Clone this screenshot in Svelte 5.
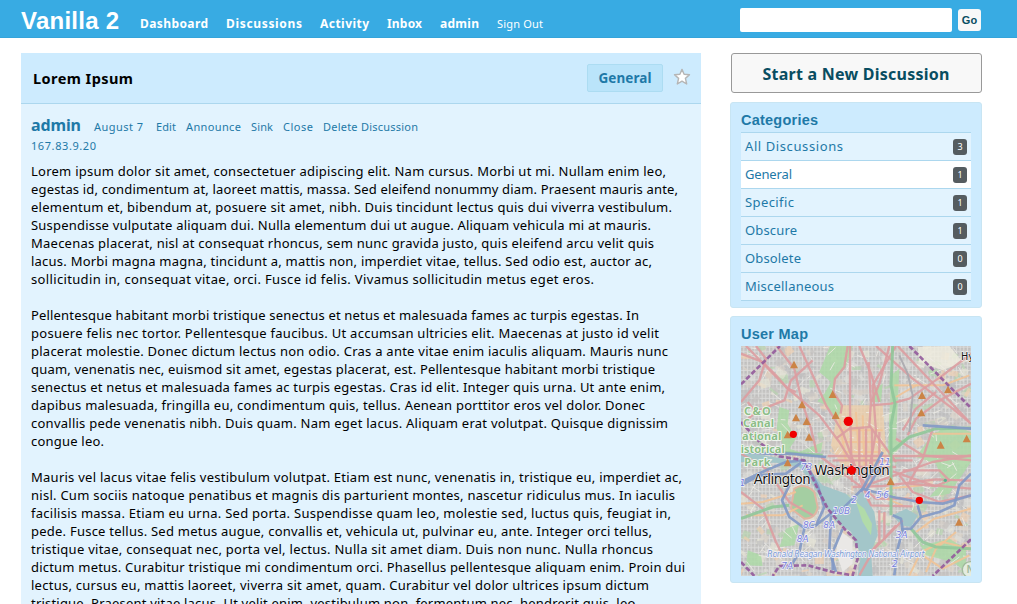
<script>
  const nav = [
    ['Dashboard', 68], ['Discussions', 76], ['Activity', 49], ['Inbox', 35], ['admin', 39]
  ];
  const actions = [['Edit', 20], ['Announce', 55], ['Sink', 22], ['Close', 30], ['Delete Discussion', 95]];
  const categories = [
    ['All Discussions', 3, 98], ['General', 1, 47], ['Specific', 1, 49],
    ['Obscure', 1, 52], ['Obsolete', 0, 56], ['Miscellaneous', 0, 89]
  ];
  const paragraphs = [
    [
      ['Lorem ipsum dolor sit amet, consectetuer adipiscing elit. Nam cursus. Morbi ut mi. Nullam enim leo,', 635],
      ['egestas id, condimentum at, laoreet mattis, massa. Sed eleifend nonummy diam. Praesent mauris ante,', 647],
      ['elementum et, bibendum at, posuere sit amet, nibh. Duis tincidunt lectus quis dui viverra vestibulum.', 641],
      ['Suspendisse vulputate aliquam dui. Nulla elementum dui ut augue. Aliquam vehicula mi at mauris.', 620],
      ['Maecenas placerat, nisl at consequat rhoncus, sem nunc gravida justo, quis eleifend arcu velit quis', 623],
      ['lacus. Morbi magna magna, tincidunt a, mattis non, imperdiet vitae, tellus. Sed odio est, auctor ac,', 621],
      ['sollicitudin in, consequat vitae, orci. Fusce id felis. Vivamus sollicitudin metus eget eros.', 563]
    ],
    [
      ['Pellentesque habitant morbi tristique senectus et netus et malesuada fames ac turpis egestas. In', 608],
      ['posuere felis nec tortor. Pellentesque faucibus. Ut accumsan ultricies elit. Maecenas at justo id velit', 628],
      ['placerat molestie. Donec dictum lectus non odio. Cras a ante vitae enim iaculis aliquam. Mauris nunc', 637],
      ['quam, venenatis nec, euismod sit amet, egestas placerat, est. Pellentesque habitant morbi tristique', 624],
      ['senectus et netus et malesuada fames ac turpis egestas. Cras id elit. Integer quis urna. Ut ante enim,', 634],
      ['dapibus malesuada, fringilla eu, condimentum quis, tellus. Aenean porttitor eros vel dolor. Donec', 614],
      ['convallis pede venenatis nibh. Duis quam. Nam eget lacus. Aliquam erat volutpat. Quisque dignissim', 637],
      ['congue leo.', 73]
    ],
    [
      ['Mauris vel lacus vitae felis vestibulum volutpat. Etiam est nunc, venenatis in, tristique eu, imperdiet ac,', 651],
      ['nisl. Cum sociis natoque penatibus et magnis dis parturient montes, nascetur ridiculus mus. In iaculis', 644],
      ['facilisis massa. Etiam eu urna. Sed porta. Suspendisse quam leo, molestie sed, luctus quis, feugiat in,', 640],
      ['pede. Fusce tellus. Sed metus augue, convallis et, vehicula ut, pulvinar eu, ante. Integer orci tellus,', 621],
      ['tristique vitae, consequat nec, porta vel, lectus. Nulla sit amet diam. Duis non nunc. Nulla rhoncus', 622],
      ['dictum metus. Curabitur tristique mi condimentum orci. Phasellus pellentesque aliquam enim. Proin dui', 654],
      ['lectus, cursus eu, mattis laoreet, viverra sit amet, quam. Curabitur vel dolor ultrices ipsum dictum', 618],
      ['tristique. Praesent vitae lacus. Ut velit enim, vestibulum non, fermentum nec, hendrerit quis, leo.', 608]
    ]
  ];

  // Tracks a single line of text so that it fills the given measure.
  function fit(node, width) {
    const natural = node.getBoundingClientRect().width;
    const gap = (width - natural) / (node.textContent.length - 1);
    node.style.letterSpacing = gap.toFixed(4) + 'px';
    node.style.marginRight = (-gap).toFixed(4) + 'px';
  }

  // Street blocks scattered over the map, from a small seeded generator.
  let seed = 17;
  const rnd = () => (seed = (seed * 16807) % 2147483647) / 2147483647;
  const tints = ['#c5c2c0', '#e6e5d6', '#ddd5cb', '#b5d4ae', '#f0cfb0', '#bdbdbe', '#dededa', '#d5cec6'];
  const blocks = Array.from({ length: 700 }, () => ({
    x: 10 + rnd() * 690, y: 8 + rnd() * 690, w: 6 + rnd() * 26, h: 5 + rnd() * 22,
    r: rnd() * 80 - 40, c: tints[Math.floor(rnd() * tints.length)]
  }));
  const lanes = Array.from({ length: 190 }, () => ({
    x: 15 + rnd() * 670, y: 12 + rnd() * 670, dx: rnd() * 70 - 35, dy: rnd() * 60 - 30
  }));

  const greens = [
    'M282 12H350L330 75 295 115 292 150 318 200 302 235 272 190 244 178 265 155 285 120 250 90Z',
    'M130 195L160 205 155 245 180 290 160 320 190 330 260 300 255 330 150 332 122 260Z',
    'M590 275L650 250 705 270V360L640 455 580 465 620 420 600 365 540 345Z',
    'M465 100L490 80 480 300 520 285 480 330 455 350Z',
    'M150 560L190 545 175 610 130 615Z', 'M35 625L75 640 80 672 30 670Z',
    'M525 560L560 610 640 590 690 620 690 690 650 660 570 640Z',
    'M415 140L440 125 435 180 405 180Z', 'M360 480L405 520 408 570 385 580Z'
  ];
  const purples = ['M15 127L132 12', 'M520 12L705 198', 'M15 240L75 305 130 343 205 355 240 430 275 500 325 560 360 595 365 650 350 700 290 690 215 670 130 672 110 702', 'M15 660L55 702', 'M705 592L590 702'];
  const reds = [
    'M30 12L150 135 250 220 310 300 390 430', 'M122 12L175 80 198 180 225 260 242 332', 'M190 12L230 100 270 190 320 270 360 380 400 480',
    'M342 12V200L348 420', 'M398 60L405 180 400 250 480 360', 'M370 12L405 95 430 180',
    'M405 190L465 185 520 170 620 100 705 35', 'M480 12L410 130 420 270 400 380', 'M485 12L700 240', 'M420 12L530 110 650 200 705 245',
    'M15 180L70 115 90 50 60 12', 'M15 35L80 60 120 100 155 140 180 150', 'M230 55L165 115 145 175 70 205',
    'M335 12L325 75 297 110 292 150 318 190 314 215',
    'M705 125L620 170 540 230 515 280', 'M600 150L540 200 500 265', 'M590 260L560 350 520 420', 'M275 342H705', 'M480 290L560 340 705 355',
    'M370 260V400M390 260V410M408 260V420M430 270V400', 'M270 375H480M290 355H530', 'M255 345L390 445 420 470H530', 'M390 430L590 360 705 340',
    'M470 388L590 430 705 440', 'M350 435L440 432 600 412 705 416', 'M500 385L610 385 640 415 600 432 515 425', 'M390 460L405 490 530 493', 'M490 400L530 450 610 480 705 460',
    'M15 450L80 500 120 600 140 640', 'M15 335L90 380 160 480 230 520', 'M300 290L340 260 405 255', 'M430 505V600L405 630M445 510V590L480 550', 'M370 700L415 620 500 535', 'M15 250L60 210 35 180', 'M460 12L430 125 406 180'
  ];
  const blues = [
    'M15 430L70 400 150 395 205 355 245 430 265 495 240 550 205 558 160 525 138 475 160 430', 'M205 558L190 630 160 680',
    'M240 550L290 510 320 500 380 440', 'M285 520L280 625 300 690', 'M320 560L290 630V685', 'M380 440L470 465 550 480 620 485 705 460', 'M470 520L495 530 500 565 485 620 475 700', 'M705 395L670 430 655 490 610 510 555 525 545 490', 'M555 525L525 560 495 562', 'M15 330L90 335 160 335 270 345', 'M15 420L90 385 150 360 205 355', 'M375 450L440 330M390 445L440 365', 'M560 250L705 260'
  ];
  const oranges = ['M480 165L540 130 620 130 700 100', 'M475 130H545', 'M590 275L705 275', 'M540 570L595 530 705 500', 'M520 700L555 630 620 600 705 620', 'M560 640L620 680 700 640', 'M570 690L600 620 660 570', 'M15 485L80 480 180 450', 'M30 520L140 520 200 490', 'M310 230L330 360M360 210L370 360M380 220L385 370M310 265H440M320 300H440M320 330H430', 'M450 440L560 430M450 470L500 490'];
  const places = [[174, 68], [290, 157], [198, 188], [180, 227], [212, 238], [219, 285], [155, 278], [299, 220], [155, 362], [558, 160], [636, 143], [556, 212], [614, 309], [692, 290], [464, 418], [669, 540]];
  const routes = [['73', 194, 385], ['11', 430, 368], ['2', 346, 484], ['4', 386, 467], ['5', 421, 467], ['6', 442, 467], ['10B', 290, 515], ['8C', 201, 557], ['8A', 262, 557], ['8A', 182, 600], ['3A', 479, 587], ['7A', 136, 681], ['2', 468, 675], ['1', 11, 431]];
</script>

<header>
  <h1><span use:fit={98}>Vanilla 2</span></h1>
  <nav>
    {#each nav as [label, width]}<a href="#top"><span use:fit={width}>{label}</span></a>{/each}
    <a class="signout" href="#top"><span use:fit={46}>Sign Out</span></a>
  </nav>
  <form>
    <input aria-label="Search" />
    <button type="button">Go</button>
  </form>
</header>

<div class="page">
  <main>
    <div class="title">
      <h2><span use:fit={100}>Lorem Ipsum</span></h2>
      <a class="tag" href="#top"><span use:fit={53}>General</span></a>
      <svg class="star" width="18" height="18" viewBox="0 0 18 18">
        <path d="M9 1.4L11.1 6.3 16.5 6.8 12.4 10.4 13.7 16 9 13.1 4.3 16 5.6 10.4 1.5 6.8 6.9 6.3Z" fill="#fff" stroke="#b5b5b5" stroke-width="1.4" stroke-linejoin="round" />
      </svg>
    </div>
    <article>
      <div class="meta">
        <a class="author" href="#top"><span use:fit={50}>admin</span></a>
        <span class="date"><span use:fit={49}>August 7</span></span>
        {#each actions as [label, width]}<a href="#top"><span use:fit={width}>{label}</span></a>{/each}
      </div>
      <div class="ip"><span use:fit={65}>167.83.9.20</span></div>
      {#each paragraphs as lines}
        <p>{#each lines as [text, width]}<span class="line"><span use:fit={width}>{text}</span></span>{/each}</p>
      {/each}
    </article>
  </main>

  <aside>
    <button class="start" type="button"><span use:fit={187}>Start a New Discussion</span></button>
    <section class="box cats">
      <h4><span use:fit={77}>Categories</span></h4>
      <ul>
        {#each categories as [name, count, width], i}
          <li class:active={i === 1}><a href="#top"><span use:fit={width}>{name}</span></a><b>{count}</b></li>
        {/each}
      </ul>
    </section>
    <section class="box map">
      <h4><span use:fit={67}>User Map</span></h4>
      <svg width="230" height="230" viewBox="15 12 690 690">
        <defs>
          <pattern id="streets" width="11" height="14" patternUnits="userSpaceOnUse">
            <rect width="11" height="14" fill="#c8c7c5" />
            <path d="M0 1H11M1 0V14" stroke="#dededc" stroke-width="2.5" />
            <path d="M5 6H9" stroke="#b5b5b6" stroke-width="3" />
          </pattern>
        </defs>
        <rect x="15" y="12" width="690" height="690" fill="url(#streets)" />
        {#each blocks as b}
          <rect x={b.x} y={b.y} width={b.w} height={b.h} fill={b.c} opacity="0.65" transform="rotate({b.r} {b.x} {b.y})" />
        {/each}
        <path d="M310 190H440L455 380 320 380 285 310Z" fill="#efcfa8" opacity="0.75" />
        <path d="M545 15L640 12 680 60 620 85 550 60Z" fill="#f0eee0" opacity="0.8" />
        {#each greens as d}<path {d} fill="#add9a7" opacity="0.85" />{/each}
        {#each lanes as l}<path d="M{l.x} {l.y}l{l.dx} {l.dy}" stroke="#eeece6" stroke-width="2.5" />{/each}
        <path d="M175 440Q205 420 235 450L245 495Q240 530 205 530L165 500Z" fill="#a4cea2" stroke="#dfb5a2" stroke-width="6" />
        <path d="M15 330L130 348 205 365 260 430 330 455 345 470 380 450 415 510 425 580 405 630 410 702H365L375 640 345 570 300 540 260 480 225 420 190 375 120 362 15 360Z" fill="#a3c6c9" />
        <path d="M360 480L385 500 408 545 405 580 380 540Z" fill="#b1dba9" />
        <path d="M310 565L350 595 350 665 320 690 300 630Z" fill="#eae8e6" />
        <path d="M470 520L510 500 545 520 525 555 495 550Z" fill="#a3c6c9" />
        {#each oranges as d}<path {d} class="road" stroke="#f0c397" stroke-width="6" />{/each}
        {#each reds as d}<path {d} class="road" stroke="#dc9da1" stroke-width="7" />{/each}
        <path class="road" d="M470 12L465 130 477 185 465 250V520M465 330L520 285 600 260 705 258M15 530L110 495 160 490M525 560L560 600 600 615 705 620M110 330L260 340" stroke="#90c79a" stroke-width="9" />
        <path class="road" d="M490 40L515 95 530 160 520 270" stroke="#aaa9ae" stroke-width="6" />
        {#each blues as d}<path {d} class="road" stroke="#8299c5" stroke-width="8" />{/each}
        {#each purples as d}<path {d} class="road" stroke="#925a9b" stroke-width="8" stroke-dasharray="15 7" />{/each}
        {#each places as [x, y]}<path d="M{x} {y - 12}L{x + 12} {y + 11}H{x - 12}Z" fill="#cb8446" />{/each}
        <g class="park">
          <text x="24" y="219" textLength="80">C&amp;O</text>
          <text x="21" y="256" textLength="93">Canal</text>
          <text x="18" y="294" textLength="118">ational</text>
          <text x="14" y="333" textLength="132">istorical</text>
          <text x="25" y="372" textLength="79">Park</text>
        </g>
        <g class="route">
          {#each routes as [name, x, y]}<text {x} {y}>{name}</text>{/each}
          <text x="94" y="644" textLength="472" class="airport">Ronald Reagan Washington National Airport</text>
        </g>
        <g class="city">
          <text x="235" y="400" textLength="226">Washington</text>
          <text x="53" y="427" textLength="171">Arlington</text>
          <text x="675" y="54" class="small">Hy</text>
        </g>
        <circle cx="703" cy="683" r="24" fill="#e4ece1" stroke="#a0b99c" stroke-width="4" />
        <text x="692" y="694" class="badge">N</text>
        <g fill="#f00000">
          <circle cx="337" cy="238" r="14" /><circle cx="172" cy="277" r="11" /><circle cx="550" cy="475" r="11" />
          <path d="M347 370L361 380 358 394 347 399 335 393 333 380Z" />
          <circle cx="628" cy="415" r="5" fill="#58b391" />
        </g>
      </svg>
    </section>
  </aside>
</div>

<style>
  :global(html) { overflow: hidden; }
  :global(body) { margin: 0; height: 604px; overflow: hidden; background: #fff; font: 13px/18px "Noto Sans", "Open Sans", sans-serif; color: #000; }
  a { color: #1e79a7; text-decoration: none; }
  h1, h2, h4, p, ul { margin: 0; padding: 0; }
  span { white-space: nowrap; }
  span > span, h1 span, h2 span, h4 span, a span, button span, .ip span { display: inline-block; }
  header { display: flex; height: 38px; box-sizing: border-box; padding-left: 21px; background: #38abe3; border-bottom: 1px solid #35a4da; }
  h1 { width: 98px; font: bold 24px/41px "Liberation Sans", Arial, sans-serif; color: #fff; }
  nav { display: flex; gap: 18px; padding: 15px 0 0 21px; }
  nav a { color: #fff; font-weight: bold; font-size: 12px; line-height: 18px; }
  nav .signout { font-weight: normal; font-size: 11px; }
  form { display: flex; gap: 6px; margin-left: auto; padding: 8px 36px 0 0; }
  input { width: 212px; height: 24px; box-sizing: border-box; border: 0; border-radius: 2px; background: #fff; padding: 0; }
  form button { width: 23px; height: 22px; margin-top: 1px; padding: 0; border: 0; border-radius: 3px; background: #f8f8f8; color: #084d61; font: bold 11px/22px "Liberation Sans", Arial, sans-serif; }
  .page { display: flex; padding: 15px 0 0 21px; height: 551px; overflow: hidden; }
  main { width: 680px; background: #e2f3fe; }
  .title { display: flex; align-items: center; height: 51px; box-sizing: border-box; background: #cdebfe; border-bottom: 1px solid #acd7ee; padding: 0 10px 0 12px; }
  h2 { flex: 1; font-size: 14.5px; line-height: 18px; }
  .tag { width: 76px; height: 28px; box-sizing: border-box; border: 1px solid #acdcf2; border-radius: 2px; background: #bae4fa; text-align: center; font: bold 13.5px/26px "Noto Sans", sans-serif; margin-right: 10px; }
  .star { flex: none; margin-top: -2px; }
  article { padding: 11px 10px 0; }
  .meta { display: flex; gap: 10px; align-items: baseline; height: 22px; font-size: 11px; line-height: 21px; }
  .meta .author { font-size: 16px; font-weight: bold; margin-right: 3px; }
  .date { color: #1e79a7; margin-right: 3px; }
  .ip { font-size: 11px; line-height: 18px; height: 25px; color: #1e79a7; }
  p { margin-bottom: 18px; }
  .line { display: block; height: 18px; }
  aside { width: 252px; margin-left: 29px; }
  .start { display: block; width: 251px; height: 40px; margin: 0 0 0 0.5px; padding: 0; box-sizing: border-box; border: 1px solid #999; border-radius: 3px; background: #f8f8f8; color: #084d61; font: bold 16px/38px "Noto Sans", sans-serif; }
  .start span { position: relative; top: 1px; }
  .box { box-sizing: border-box; border: 1px solid #c8e5f3; border-radius: 3px; background: #cdebfe; padding: 7px 10px 0; }
  h4 { font: bold 14.5px/20px "Liberation Sans", Arial, sans-serif; color: #1e79a7; }
  .cats { height: 206px; margin-top: 9px; }
  .map { height: 267px; margin-top: 8px; }
  .map svg { display: block; margin-top: 2px; }
  ul { list-style: none; border-top: 1px solid #acd7ee; margin-top: 2px; }
  li { display: flex; justify-content: space-between; align-items: center; height: 28px; box-sizing: border-box; padding: 0 4px 2px; background: #e2f3fe; border-bottom: 1px solid #acd7ee; }
  li.active { background: #fff; }
  li b { width: 14px; height: 16px; margin-top: 3px; border-radius: 3px; background: #555c60; color: #fff; font-size: 9px; font-weight: normal; line-height: 16px; text-align: center; }
  .road { fill: none; stroke-linejoin: round; opacity: 0.9; }
  .park { font: bold 33px "Noto Sans", sans-serif; fill: #8dbd88; stroke: #f4faf2; stroke-width: 5; paint-order: stroke; }
  .route { font: italic 27px "DejaVu Sans", sans-serif; fill: #7680da; stroke: #f3f2fb; stroke-width: 4; paint-order: stroke; }
  .route .airport { font-size: 24px; fill: #7b9bd1; }
  .city { font: 40px "DejaVu Sans", sans-serif; fill: #111; stroke: #fff; stroke-width: 3; paint-order: stroke; }
  .city .small { font-size: 29px; }
  .badge { font: bold 30px "Liberation Sans", sans-serif; fill: #a0b99c; }
</style>
